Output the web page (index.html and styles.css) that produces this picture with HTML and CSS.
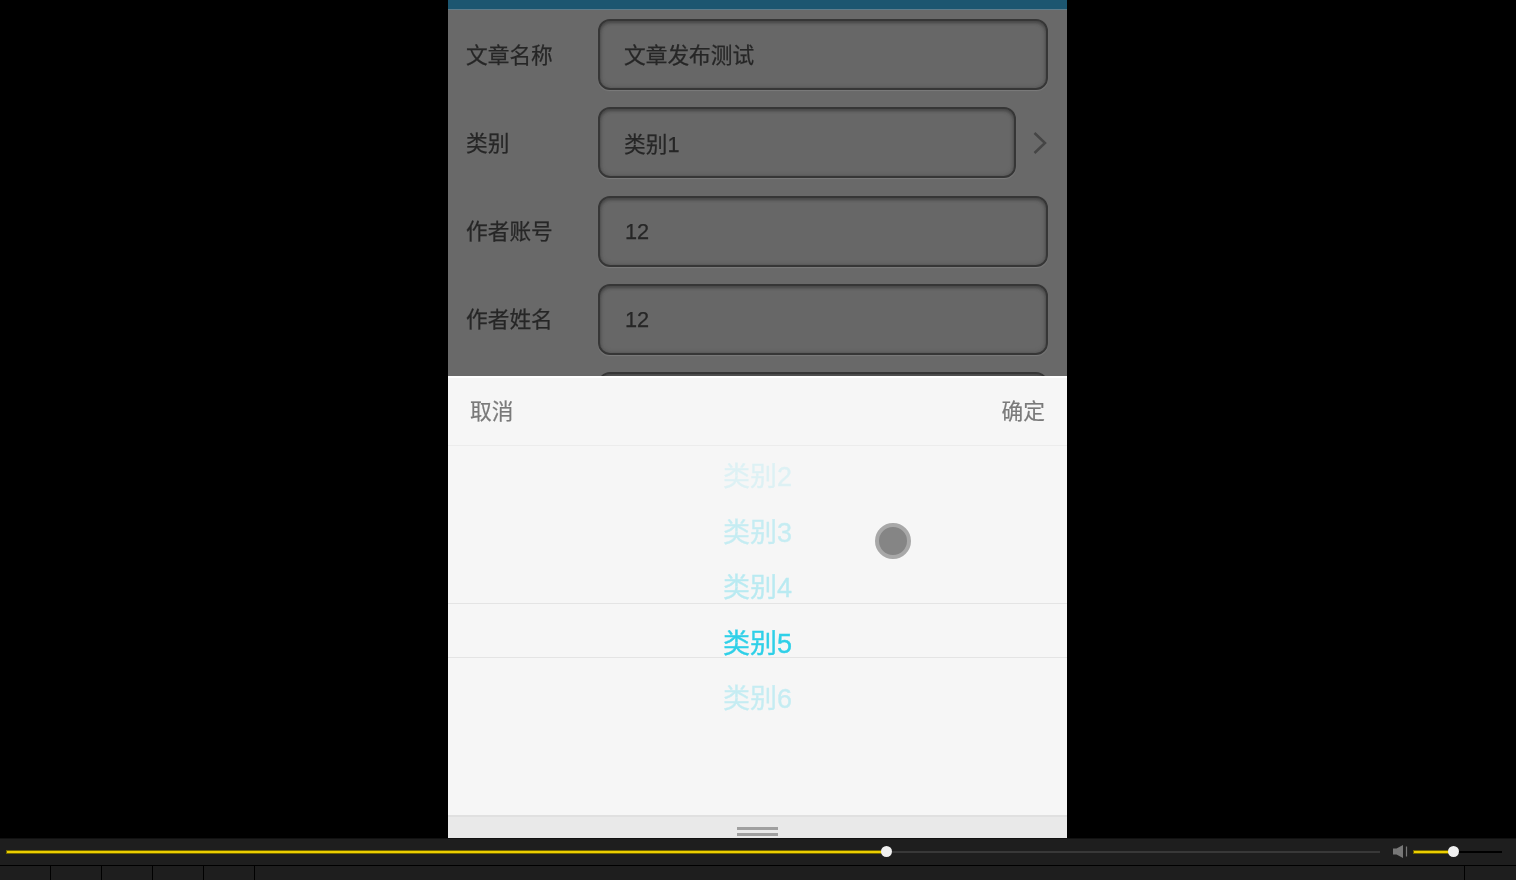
FILE: index.html
```html
<!DOCTYPE html>
<html lang="zh-CN">
<head>
    <meta charset="UTF-8">
    <title>文章发布</title>
    <link rel="stylesheet" href="styles.css">
</head>
<body>
    <!-- Video area -->
    <div class="stage">
        <div class="phone">
            <div class="topbar"></div>

            <!-- Dimmed form -->
            <div class="form">
                <div class="row">
                    <span class="label">文章名称</span>
                    <div class="field">文章发布测试</div>
                </div>
                <div class="row">
                    <span class="label">类别</span>
                    <div class="field mixed">类别1</div>
                    <svg class="chevron" width="16" height="24" viewBox="0 0 16 24"><path d="M2.5 2 L13 12 L2.5 22" fill="none" stroke="#454545" stroke-width="2.5"/></svg>
                </div>
                <div class="row">
                    <span class="label">作者账号</span>
                    <div class="field num">12</div>
                </div>
                <div class="row">
                    <span class="label">作者姓名</span>
                    <div class="field num">12</div>
                </div>
                <div class="row">
                    <span class="label"></span>
                    <div class="field"></div>
                </div>
            </div>

            <!-- Picker sheet -->
            <div class="sheet">
                <div class="sheet-head">
                    <span>取消</span>
                    <span>确定</span>
                </div>
                <div class="wheel">
                    <div class="band"></div>
                    <div class="item fade-1">类别2</div>
                    <div class="item fade-2">类别3</div>
                    <div class="item fade-3">类别4</div>
                    <div class="item current">类别5</div>
                    <div class="item fade-2">类别6</div>
                    <div class="touch"></div>
                </div>
                <div class="sheet-foot">
                    <div class="handle"></div>
                </div>
            </div>
        </div>
    </div>

    <!-- Player controls -->
    <div class="controls">
        <div class="seek-row">
            <div class="track seek">
                <div class="fill seek-fill"></div>
                <div class="thumb"></div>
            </div>
            <svg class="speaker" width="15" height="13" viewBox="0 0 15 13"><path d="M0 3.5 H3.5 L10 0 V13 L3.5 9.5 H0 Z" fill="#777"/><path d="M13.5 1.5 V11.5" stroke="#777" stroke-width="1.2"/></svg>
            <div class="track volume">
                <div class="fill volume-fill"></div>
                <div class="thumb"></div>
            </div>
        </div>
        <div class="tool-row">
            <div class="cell"></div>
            <div class="cell"></div>
            <div class="cell"></div>
            <div class="cell"></div>
            <div class="cell"></div>
            <div class="cell wide"></div>
            <div class="cell last"></div>
        </div>
    </div>
</body>
</html>
```

FILE: styles.css
```css
/* Base styles */
html, body {
    height: 100%;
}

body {
    margin: 0;
    background-color: #000;
    font-family: "Liberation Sans", "Noto Sans CJK SC", sans-serif;
    display: flex;
    flex-direction: column;
    overflow: hidden;
}

/* Video area */
.stage {
    height: 838px;
    flex-shrink: 0;
    display: flex;
    justify-content: center;
    padding-right: 1px;
}

.phone {
    width: 619px;
    display: flex;
    flex-direction: column;
    filter: blur(0.35px);
}

.topbar {
    height: 10px;
    box-sizing: border-box;
    background-color: #1c5670;
    border-bottom: 1px solid #5f7c8a;
    flex-shrink: 0;
}

/* Form */
.form {
    height: 366px;
    box-sizing: border-box;
    overflow: hidden;
    background-color: #696969;
    padding: 9px 19px 0 18px;
    flex-shrink: 0;
    display: flex;
    flex-direction: column;
    gap: 17.3px;
}

.row {
    height: 71px;
    display: flex;
    align-items: center;
    flex-shrink: 0;
    font-size: 21.7px;
    color: #262626;
    -webkit-text-stroke: 0.25px #262626;
}

.label {
    width: 132px;
    flex-shrink: 0;
    padding-bottom: 3px;
}

.field {
    flex: 1;
    height: 100%;
    box-sizing: border-box;
    display: flex;
    align-items: center;
    padding: 0 0 3px 24px;
    background-color: #676767;
    border: 2px solid #363636;
    border-radius: 12px;
    box-shadow: inset 0 2px 3px #484848, inset 0 0 4px #525252, 0 1px 1px #7c7c7c;
}

.mixed {
    padding-bottom: 0;
}

.num {
    padding: 1px 0 0 25px;
}

.chevron {
    flex-shrink: 0;
    margin-left: 16px;
}

/* Picker sheet */
.sheet {
    flex: 1;
    display: flex;
    flex-direction: column;
    background-color: #f6f6f6;
    border-top: 2px solid #fff;
}

.sheet-head {
    height: 68px;
    flex-shrink: 0;
    box-sizing: border-box;
    display: flex;
    align-items: center;
    justify-content: space-between;
    padding: 0 22px 4px;
    font-size: 21.7px;
    color: #7a7a7a;
    -webkit-text-stroke: 0.2px #7a7a7a;
    border-bottom: 1px solid #ececec;
}

.wheel {
    flex: 1;
    position: relative;
    text-align: center;
    font-size: 27px;
    line-height: 55.6px;
    color: #2fd0e8;
    -webkit-text-stroke: 0.4px #2fd0e8;
    padding-top: 4px;
}

.band {
    position: absolute;
    left: 0;
    right: 0;
    top: 157px;
    height: 53px;
    border-top: 1px solid #e4e4e4;
    border-bottom: 1px solid #e4e4e4;
}

.item {
    position: relative;
    height: 55.6px;
}

.fade-1 {
    opacity: 0.12;
}

.fade-2 {
    opacity: 0.24;
}

.fade-3 {
    opacity: 0.3;
}

.touch {
    position: absolute;
    left: 427px;
    top: 77px;
    width: 28px;
    height: 28px;
    border-radius: 50%;
    background-color: #858585;
    border: 4px solid #a8a8a8;
}

.sheet-foot {
    height: 23px;
    flex-shrink: 0;
    box-sizing: border-box;
    background-color: #e9e9e9;
    border-top: 2px solid #e0e0e0;
    display: flex;
    justify-content: center;
    padding-top: 10px;
}

.handle {
    width: 41px;
    height: 3px;
    border-top: 3px solid #a0a0a0;
    border-bottom: 3px solid #a0a0a0;
}

/* Player controls */
.controls {
    height: 42px;
    flex-shrink: 0;
    box-sizing: border-box;
    background-color: #1e1e1e;
    border-top: 1px solid #111;
    display: flex;
    flex-direction: column;
}

.seek-row {
    height: 27px;
    box-sizing: border-box;
    display: flex;
    align-items: center;
    padding: 0 14px 1px 7px;
    border-bottom: 1px solid #000;
    flex-shrink: 0;
}

.track {
    height: 2px;
    position: relative;
    flex-shrink: 0;
}

.seek {
    width: 1373px;
    background-color: #383838;
}

.volume {
    width: 88px;
    margin-left: 6px;
    background-color: #000;
}

.speaker {
    margin-left: 13px;
    flex-shrink: 0;
}

.fill {
    height: 2px;
    background-color: #ecce00;
    box-shadow: 0 0 0 1px #6f6300;
}

.seek-fill {
    width: 879px;
}

.volume-fill {
    width: 39px;
}

.thumb {
    position: absolute;
    top: -4.5px;
    width: 11px;
    height: 11px;
    border-radius: 50%;
    background-color: #f0f0f0;
}

.seek .thumb {
    left: 874px;
}

.volume .thumb {
    left: 34px;
}

.tool-row {
    flex: 1;
    display: flex;
}

.cell {
    width: 50px;
    border-right: 1px solid #000;
    flex-shrink: 0;
}

.wide {
    width: 1209px;
}

.last {
    border-right: none;
}
```
